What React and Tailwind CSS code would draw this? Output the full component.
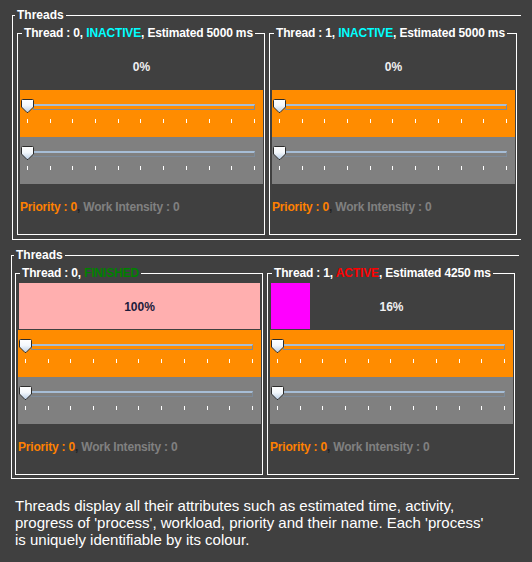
const THUMB_PATH = 'M1.5 0.5 H11.5 Q12.5 0.5 12.5 1.5 V8 L7 13.5 H6 L0.5 8 V1.5 Q0.5 0.5 1.5 0.5 Z';

const Thumb = () => (
  <svg className="absolute left-[1px] top-[9px]" width="13" height="15" viewBox="0 0 13 15">
    <defs>
      <linearGradient id="thumbFill" x1="0" y1="0" x2="0" y2="1">
        <stop offset="0" stopColor="#ffffff" />
        <stop offset="0.45" stopColor="#f4f8fc" />
        <stop offset="1" stopColor="#b9cde4" />
      </linearGradient>
    </defs>
    <path d={THUMB_PATH} fill="url(#thumbFill)" stroke="#2c2c2c" strokeWidth="1" />
  </svg>
);

const Slider = ({ bg }) => (
  <div className={`relative h-[47px] ${bg}`}>
    {/* track */}
    <div className="absolute left-[13px] right-[8px] top-[14px] h-[6px] border border-[#7d8a98] border-t-2 border-t-[#a6bdd6]" />
    <Thumb />
    {/* ticks */}
    <div className="absolute left-[7px] right-[8px] top-[29px] flex justify-between">
      {Array.from({ length: 11 }).map((_, i) => (
        <div key={i} className="w-[1px] h-[4px] bg-white" />
      ))}
    </div>
  </div>
);

const ThreadPanel = ({ title, pct, fillClass, textClass }) => (
  <fieldset className="w-[248px] border border-white pl-[2px] pr-[1px]">
    <legend className="ml-[2px] px-[2px] text-[12px] leading-[14px] font-bold tracking-[-0.15px] text-white">{title}</legend>

    {/* progress */}
    <div className="relative mx-[1px] mt-[3px] h-[46px] flex items-center justify-center">
      {pct > 0 && (
        <div className={`absolute left-0 top-0 bottom-0 ${fillClass}`} style={{ width: `${pct}%` }} />
      )}
      <span className={`relative mt-[1px] text-[12px] leading-[14px] font-bold ${textClass}`}>{pct}%</span>
    </div>

    <div className="mt-[1px]">
      <Slider bg="bg-[#ff8c00]" />
      <Slider bg="bg-[#808080]" />
    </div>

    <div className="h-[50px] pt-[16px] text-[12px] leading-[14px] font-bold tracking-[-0.2px]">
      <span className="text-[#ff8000]">Priority : 0</span>
      <span className="text-[#222222]">, </span>
      <span className="text-[#808080]">Work Intensity : 0</span>
    </div>
  </fieldset>
);

const Group = ({ className, padClass, children }) => (
  <fieldset className={`border border-white border-r-0 ${className}`}>
    <legend className="ml-[2px] px-[2px] text-[12px] leading-[14px] font-bold text-white">Threads</legend>
    <div className={`flex gap-[4px] pt-[4px] ${padClass}`}>{children}</div>
  </fieldset>
);

export default function App() {
  return (
    <div
      className="w-[532px] h-[562px] overflow-hidden bg-[#404040] pt-[8px]"
      style={{ fontFamily: '"Liberation Sans", Arial, sans-serif' }}
    >
      {/* first snapshot: all idle */}
      <Group className="ml-[12px] w-[509px]" padClass="pl-[4px] pb-[4px]">
        <ThreadPanel
          title={<>Thread : 0, <span className="text-[#00ffff]">INACTIVE</span>, Estimated 5000 ms</>}
          pct={0}
          fillClass=""
          textClass="text-[#f0f0f0]"
        />
        <ThreadPanel
          title={<>Thread : 1, <span className="text-[#00ffff]">INACTIVE</span>, Estimated 5000 ms</>}
          pct={0}
          fillClass=""
          textClass="text-[#f0f0f0]"
        />
      </Group>

      {/* second snapshot: one finished, one running */}
      <Group className="ml-[11px] mt-[8px] w-[508px]" padClass="pl-[3px] pb-[3px]">
        <ThreadPanel
          title={<>Thread : 0, <span className="text-[#008000]">FINISHED</span></>}
          pct={100}
          fillClass="bg-[#ffafaf]"
          textClass="text-[#1c1c3c]"
        />
        <ThreadPanel
          title={<>Thread : 1, <span className="text-[#ff0000]">ACTIVE</span>, Estimated 4250 ms</>}
          pct={16}
          fillClass="bg-[#ff00ff]"
          textClass="text-[#f0f0f0]"
        />
      </Group>

      <p className="ml-[15px] mt-[18px] text-[15px] leading-[17px] text-white">
        Threads display all their attributes such as estimated time, activity,
        <br />
        progress of 'process', workload, priority and their name. Each 'process'
        <br />
        is uniquely identifiable by its colour.
      </p>
    </div>
  );
}
